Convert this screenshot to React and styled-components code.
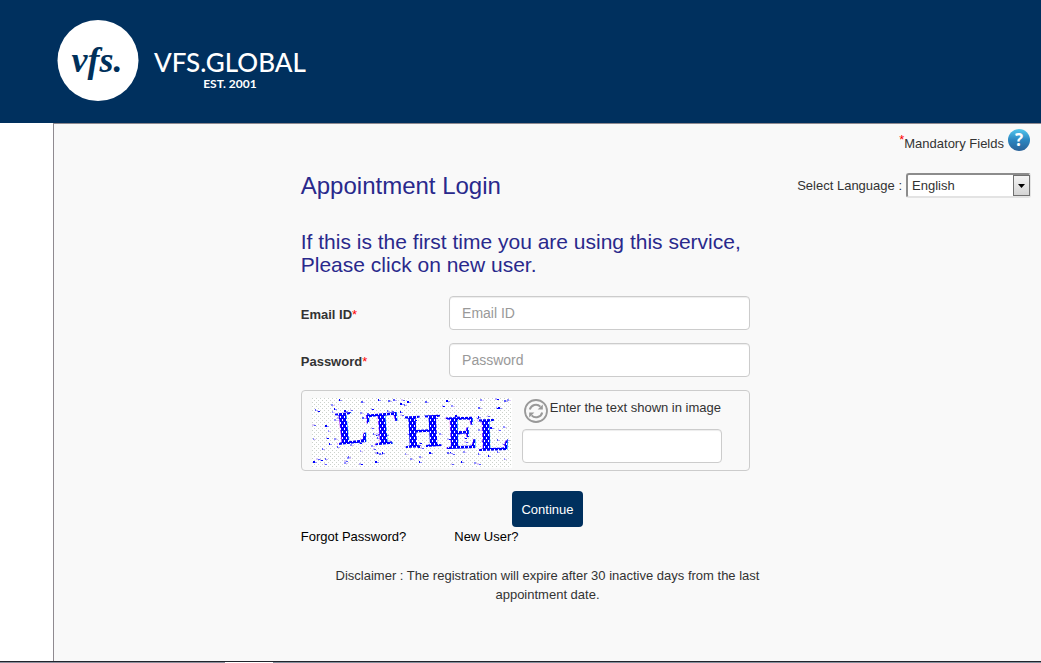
import { useState } from "react";
import styled, { createGlobalStyle } from "styled-components";

const GlobalStyle = createGlobalStyle`
  body {
    margin: 0;
    background-color: #fff;
    color: #333;
    font-family: "Liberation Sans", Arial, sans-serif;
    font-size: 13px;
    line-height: 19px;
  }
  * { box-sizing: border-box; }
`;

const Logo = () => {
  return (
    <LogoLink href="#">
      <svg width="82" height="82" viewBox="0 0 82 82">
        <circle cx="41" cy="40.5" r="40.5" fill="#fff" />
        <LogoMark x="40" y="52" textAnchor="middle">vfs.</LogoMark>
      </svg>
      <LogoText>
        <LogoName>VFS.GLOBAL</LogoName>
        <LogoYear>EST. 2001</LogoYear>
      </LogoText>
    </LogoLink>
  );
};

const HelpIcon = () => {
  return (
    <svg width="22" height="22" viewBox="0 0 22 22">
      <defs>
        <linearGradient id="help" x1="0" y1="0" x2="0" y2="1">
          <stop offset="0" stopColor="#52c8ee" />
          <stop offset="0.5" stopColor="#2b86c0" />
          <stop offset="1" stopColor="#2a6299" />
        </linearGradient>
      </defs>
      <circle cx="11" cy="11" r="11" fill="url(#help)" />
      <HelpMark x="11" y="17" textAnchor="middle">?</HelpMark>
    </svg>
  );
};

const RefreshIcon = () => {
  return (
    <svg width="24" height="24" viewBox="0 0 24 24" fill="none" stroke="#999">
      <circle cx="12" cy="12" r="11" strokeWidth="1.8" />
      <path d="M5.8 10.6 A6.3 6.3 0 0 1 16.4 7.6" strokeWidth="2" />
      <path d="M18.2 13.4 A6.3 6.3 0 0 1 7.6 16.4" strokeWidth="2" />
      <path d="M18.8 5.4 V10.6 H13.6 Z" fill="#999" stroke="none" />
      <path d="M5.2 18.6 V13.4 H10.4 Z" fill="#999" stroke="none" />
    </svg>
  );
};

/* speckles of the captcha, same ones on every render */
const makeSpeckles = () => {
  const colors = ["#0000ff", "#5a5aff", "#8f8fff", "#b9b0fa", "#d9c8f8"];
  const speckles = [];
  let seed = 41;
  const next = () => {
    seed = (seed * 16807) % 2147483647;
    return seed / 2147483647;
  };
  for (let i = 0; i < 130; i++) {
    const x = Math.floor(next() * 196);
    const y = Math.floor(next() * 67);
    const c = Math.floor(next() * colors.length);
    const w = 1 + Math.floor(next() * 2);
    speckles.push(<rect key={i} x={x} y={y} width={w} height="2" fill={colors[c]} />);
    speckles.push(<rect key={"s" + i} x={x + w} y={y + 1} width="2" height="1" fill={colors[(c + 2) % 5]} />);
  }
  return speckles;
};

const Captcha = () => {
  return (
    <svg width="200" height="70" viewBox="0 0 200 70" role="img" aria-label="captcha">
      <defs>
        <pattern id="dots" width="4" height="4" patternUnits="userSpaceOnUse">
          <rect width="4" height="4" fill="#fff" />
          <rect width="1" height="1" fill="#ccd2cc" />
          <rect x="2" y="2" width="1" height="1" fill="#ccd2cc" />
        </pattern>
        <pattern id="weave" width="4" height="6" patternUnits="userSpaceOnUse">
          <rect width="4" height="6" fill="#0000ff" />
          <rect width="1" height="2" fill="#fff" />
          <rect x="2" y="3" width="1" height="2" fill="#fff" />
        </pattern>
      </defs>
      <rect width="200" height="70" fill="url(#dots)" />
      {makeSpeckles()}
      <CaptchaText x="25 56 93 134 166" y="47 48 50 51 53" rotate="-6 -5 -3 -2 -2">LTHEL</CaptchaText>
    </svg>
  );
};

const Field = ({ id, label, type }) => {
  return (
    <FieldRow>
      <Label htmlFor={id}>{label}<Star>*</Star></Label>
      <Input id={id} type={type} placeholder={label} />
    </FieldRow>
  );
};

const LoginForm = () => {
  return (
    <Form onSubmit={(e) => e.preventDefault()}>
      <Fields>
        <Field id="email" label="Email ID" type="text" />
        <Field id="password" label="Password" type="password" />
        <CaptchaBox>
          <Captcha />
          <CaptchaEntry>
            <CaptchaHint>
              <RefreshButton type="button" aria-label="Refresh"><RefreshIcon /></RefreshButton>
              <label htmlFor="captcha">Enter the text shown in image</label>
            </CaptchaHint>
            <Input id="captcha" type="text" />
          </CaptchaEntry>
        </CaptchaBox>
      </Fields>
      <Continue type="submit">Continue</Continue>
      <Links>
        <PlainLink href="#">Forgot Password?</PlainLink>
        <PlainLink href="#">New User?</PlainLink>
      </Links>
      <Disclaimer>
        Disclaimer : The registration will expire after 30 inactive days from the last appointment date.
      </Disclaimer>
    </Form>
  );
};

const App = () => {
  const [language, setLanguage] = useState("English");
  return (
    <Page>
      <GlobalStyle />
      <Header><Logo /></Header>
      <Panel>
        <Mandatory>
          <span><Raised>*</Raised>Mandatory Fields</span>
          <HelpIcon />
        </Mandatory>
        <Columns>
          <Middle>
            <Title>Appointment Login</Title>
            <SubTitle>If this is the first time you are using this service, Please click on new user.</SubTitle>
            <LoginForm />
          </Middle>
          <Language>
            <label htmlFor="language">Select Language :</label>
            <SelectBox>
              <Select id="language" value={language} onChange={(e) => setLanguage(e.target.value)}>
                <option>English</option>
              </Select>
              <SelectArrow>
                <svg width="7" height="4" viewBox="0 0 7 4"><path d="M0 0H7L3.5 4Z" fill="#000" /></svg>
              </SelectArrow>
            </SelectBox>
          </Language>
        </Columns>
      </Panel>
      <BottomLine />
    </Page>
  );
};

const Page = styled.div`
  display: flex;
  flex-direction: column;
  min-height: 100vh;
`;

const Header = styled.header`
  padding: 20px 57px 21px;
  background-color: #00305e;
`;

const LogoLink = styled.a`
  display: inline-flex;
  align-items: center;
  gap: 15px;
  color: #fff;
  text-decoration: none;
  vertical-align: top;
`;

const LogoMark = styled.text`
  font-family: "Liberation Serif", serif;
  font-size: 36px;
  font-style: italic;
  font-weight: bold;
  fill: #00305a;
`;

const LogoText = styled.span`
  display: flex;
  flex-direction: column;
  align-items: center;
  padding-top: 18px;
  font-family: Lato, sans-serif;
`;

const LogoName = styled.span`
  font-size: 26px;
  font-weight: 500;
  line-height: 28px;
`;

const LogoYear = styled.span`
  font-size: 12px;
  font-weight: bold;
  line-height: 16px;
`;

const Panel = styled.main`
  flex: 1;
  margin-left: 53px;
  padding: 5px 11px 0 0;
  border-top: 1px solid #8f8a90;
  border-left: 1px solid #8f8a90;
  background-color: #f9f9f9;
`;

const Mandatory = styled.div`
  display: flex;
  justify-content: flex-end;
  gap: 4px;
  height: 44px;
  line-height: 30px;
`;

const Star = styled.span`
  color: #f00;
  font-weight: normal;
`;

const Raised = styled(Star)`
  position: relative;
  top: -4px;
`;

const HelpMark = styled.text`
  font-family: "Open Sans", sans-serif;
  font-size: 17px;
  font-weight: bold;
  fill: #fff;
`;

const Columns = styled.div`
  display: grid;
  grid-template-columns: 1fr 2fr 1fr;
  margin-right: -11px;
`;

const Middle = styled.section`
  grid-column: 2;
`;

const Title = styled.h1`
  margin: 0 0 31px;
  color: #29298c;
  font-size: 24px;
  font-weight: normal;
  line-height: 26px;
`;

const SubTitle = styled.h2`
  margin: 0 0 20px;
  padding-right: 45px;
  color: #29298c;
  font-size: 21px;
  font-weight: normal;
  line-height: 23px;
`;

const Language = styled.div`
  display: flex;
  justify-content: flex-end;
  align-items: flex-start;
  gap: 4px;
  padding-right: 10px;
  line-height: 25px;
`;

const SelectBox = styled.div`
  position: relative;
  width: 125px;
`;

const Select = styled.select`
  display: block;
  width: 100%;
  height: 25px;
  padding: 0 20px 0 4px;
  border: 2px solid;
  border-color: #8c8c8c #e3e3e3 #e3e3e3 #8c8c8c;
  border-radius: 3px;
  background-color: #fff;
  color: #333;
  font: inherit;
  line-height: 19px;
  appearance: none;
`;

const SelectArrow = styled.span`
  display: flex;
  position: absolute;
  top: 2px;
  right: 1px;
  align-items: center;
  justify-content: center;
  width: 17px;
  height: 21px;
  border: 1px solid #707070;
  background: linear-gradient(#f4f4f4, #d4d4d4);
  pointer-events: none;
`;

const Form = styled.form`
  display: flex;
  flex-direction: column;
`;

const Fields = styled.div`
  display: flex;
  flex-direction: column;
  gap: 13px;
  margin: 0 44px 20px 0;
`;

const FieldRow = styled.div`
  display: grid;
  grid-template-columns: 33% 1fr;
  align-items: center;
`;

const Label = styled.label`
  padding-top: 2px;
  font-weight: bold;
`;

const Input = styled.input`
  width: 100%;
  height: 34px;
  padding: 6px 12px;
  border: 1px solid #ccc;
  border-radius: 4px;
  background-color: #fff;
  box-shadow: inset 0 1px 1px rgba(0, 0, 0, 0.075);
  color: #555;
  font: inherit;
  font-size: 14px;
  &::placeholder { color: #999; opacity: 1; }
`;

const CaptchaBox = styled.div`
  display: flex;
  gap: 10px;
  padding: 7px 27px 2px 10px;
  border: 1px solid #ccc;
  border-radius: 4px;
  > svg { flex: none; }
`;

const CaptchaText = styled.text`
  font-family: "Liberation Serif", serif;
  font-size: 48px;
  font-weight: bold;
  fill: url(#weave);
`;

const CaptchaEntry = styled.div`
  flex: 1;
`;

const CaptchaHint = styled.div`
  display: flex;
  gap: 2px;
  height: 31px;
  padding: 1px 0 0 2px;
  line-height: 17px;
`;

const RefreshButton = styled.button`
  width: 24px;
  height: 24px;
  padding: 0;
  border: 0;
  background: none;
  cursor: pointer;
`;

const Continue = styled.button`
  align-self: center;
  height: 36px;
  padding: 0 9px;
  border: 0;
  border-radius: 4px;
  background-color: #00305e;
  color: #fff;
  font: inherit;
`;

const Links = styled.div`
  display: flex;
  gap: 48px;
`;

const PlainLink = styled.a`
  color: #000;
  text-decoration: none;
`;

const Disclaimer = styled.p`
  margin: 20px 24px;
  text-align: center;
`;

const BottomLine = styled.footer`
  height: 2px;
  border-top: 1px solid #20242c;
  background: linear-gradient(90deg, #8d8f9c 0 225px, #fff 225px 273px, #858f9c 273px);
`;

export default App;
